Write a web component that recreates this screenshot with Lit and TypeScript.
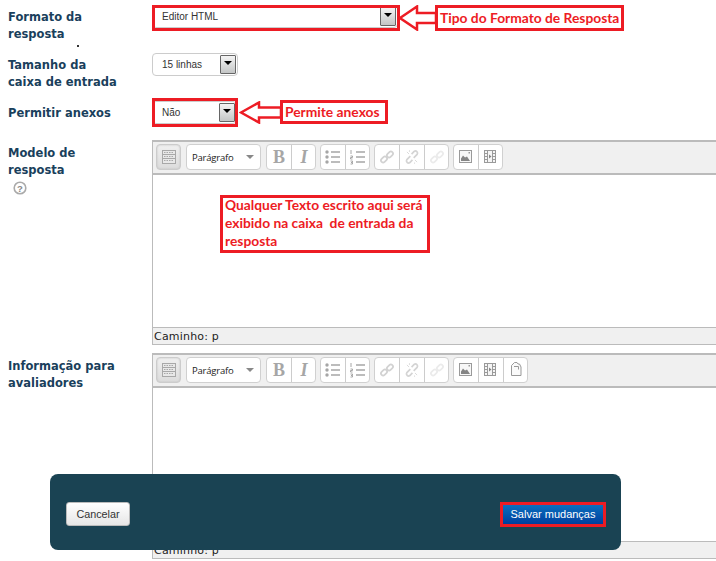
import { LitElement, html, css, svg } from "lit";
import { customElement } from "lit/decorators.js";

const icons: Record<string, any> = {
  table: svg`<g fill="none" stroke="#a8a8a8"><rect x="3.500" y="3.500" width="13" height="13" fill="#e8e8e8"/><path d="M3.500 7.500h13M3.500 11.500h13"/><path d="M5 5.500h10M5 9.500h10M5 13.500h10" stroke-dasharray="1.500 1"/></g>`,
  b: svg`<text x="10" y="16" text-anchor="middle" font-family="Liberation Serif" font-weight="700" font-size="18" fill="#a6a6a6">B</text>`,
  i: svg`<text x="10" y="16" text-anchor="middle" font-family="Liberation Serif" font-style="italic" font-weight="700" font-size="18" fill="#a6a6a6">I</text>`,
  ul: svg`<g fill="#a6a6a6"><circle cx="4" cy="5" r="1.700"/><circle cx="4" cy="10" r="1.700"/><circle cx="4" cy="15" r="1.700"/></g><path d="M8 5h9M8 10h9M8 15h9" stroke="#a6a6a6" stroke-width="1.300"/>`,
  ol: svg`<path d="M3 3v4M2.500 9h2v1.500h-2V12h2M2.500 14h2v1.500h-1.500M2.500 17h2v-1.500" stroke="#a6a6a6" fill="none"/><path d="M8 5h9M8 10h9M8 15h9" stroke="#a6a6a6" stroke-width="1.300"/>`,
  link: svg`<g transform="translate(1.500 1.500) scale(.85)" fill="none" stroke="#d2d2d2" stroke-width="2"><rect x="2.500" y="10.500" width="8" height="5" rx="2.500" transform="rotate(-45 6.500 13)"/><rect x="9.500" y="4.500" width="8" height="5" rx="2.500" transform="rotate(-45 13.500 7)"/></g>`,
  unlink: svg`<g transform="translate(1.500 1.500) scale(.85)" fill="none" stroke="#d4d4d4" stroke-width="2"><path d="M8 9 4 13a2.500 2.500 0 0 0 3.500 3.500l3-3M12 11l4-4a2.500 2.500 0 0 0-3.500-3.500l-3 3"/><path d="M4 4l2.500 2.500M16 16l-2.500-2.500M13 16.500v1.500M7 2v2" stroke-width="1"/></g>`,
  link2: svg`<g transform="translate(1.500 1.500) scale(.85)" fill="none" stroke="#ebebeb" stroke-width="2"><rect x="2.500" y="10.500" width="8" height="5" rx="2.500" transform="rotate(-45 6.500 13)"/><rect x="9.500" y="4.500" width="8" height="5" rx="2.500" transform="rotate(-45 13.500 7)"/></g>`,
  image: svg`<rect x="3.500" y="3.500" width="12" height="12" fill="#f7f7f7" stroke="#9a9a9a"/><path d="M5 14v-2.500l2-3 2 2 2-1 3 4.500z" fill="#858585"/><rect x="12.500" y="5" width="1.500" height="1.500" fill="#999"/>`,
  video: svg`<rect x="3.500" y="3.500" width="11" height="12" fill="#f5f5f5" stroke="#9a9a9a"/><path d="M6.500 3.500v12M11.500 3.500v12M3.500 6.500h3M3.500 9.500h3M3.500 12.500h3M11.500 6.500h3M11.500 9.500h3M11.500 12.500h3" stroke="#9a9a9a" fill="none"/><path d="M8 7.500l2.500 2-2.500 2z" fill="#858585"/>`,
  paste: svg`<path d="M5.500 15.500V5.500l3-3h2.500l1 1.500h1.500l1.500 3v8.500z" fill="#fafafa" stroke="#999"/><path d="M8 6.500h4.500v3" fill="none" stroke="#999"/>`,
};

@customElement("app-root")
export class AppRoot extends LitElement {
  static styles = css`
    :host { display: block; width: 716px; height: 561px; position: relative; overflow: hidden; background: #fff; font-family: "Liberation Sans", Arial, sans-serif; }
    .page { padding: 5px 0 0 8px; }
    .row { display: grid; grid-template-columns: 144px 1fr; }
    .r1 { height: 48px; } .r2 { height: 48px; } .r3 { height: 39px; } .r4 { height: 213px; } .r5 { height: 208px; }
    .label { font: 700 11.500px/16.500px "DejaVu Sans", Verdana, sans-serif; color: #1a3f5c; padding-top: 4px; width: 110px; }
    .r4 .label, .r5 .label { padding-top: 5px; }
    .r3 .label { padding-top: 4px; width: 130px; }
    .help { display: block; margin: 3px 0 0 5px; }
    .select { box-sizing: border-box; height: 23px; border: 1px solid #ccc; border-radius: 4px; display: flex; align-items: center; justify-content: space-between; background: #fff; font-size: 10px; color: #333; padding-left: 9px; }
    .s1 { width: 246px; } .s2 { width: 86px; } .s3 { width: 85px; }
    .drop { box-sizing: border-box; width: 16px; height: 19px; margin-right: 1px; border: 1px solid #666; border-radius: 1px; background: linear-gradient(#f4f4f4, #c4c6c6); display: flex; align-items: center; justify-content: center; }
    .drop i { width: 0; height: 0; border: 4px solid transparent; border-top: 4px solid #000; border-bottom: 0; margin-top: -3px; }
    .editor { width: 640px; box-sizing: border-box; border-style: solid; border-width: 2px 0 1px 1px; border-color: #bbb; display: flex; flex-direction: column; }
    .r4 .editor { height: 205px; } .r5 .editor { height: 206px; }
    .bar { height: 33px; box-sizing: border-box; background: #f0f0f0; border-bottom: 2px solid #bbb; padding: 2px 0 0 3px; display: flex; gap: 4px; }
    .tbtn, .group, .fmt { height: 26px; box-sizing: border-box; border: 1px solid #d0d0d0; border-radius: 4px; background: #fff; }
    .tbtn { width: 25px; background: linear-gradient(#f0f0f0, #dcdcdc); display: flex; align-items: center; justify-content: center; border-color: #ccc; box-shadow: inset 0 0 2px #bbb; }
    .fmt { width: 75px; margin: 0 1px; display: flex; align-items: center; justify-content: space-between; padding: 0 6px 0 5px; font: 9.500px "Open Sans", "Liberation Sans", sans-serif; color: #222; letter-spacing: -.2px; }
    .fmt i { width: 0; height: 0; border: 4px solid transparent; border-top: 4px solid #888; border-bottom: 0; }
    .group { display: flex; }
    .group span { width: 25px; display: flex; align-items: center; justify-content: center; border-right: 1px solid #ccc; box-sizing: border-box; }
    .group span:last-child { border-right: 0; width: 23px; }
    .area { flex: 1; background: #fff; }
    .status { height: 17px; box-sizing: border-box; background: #f0f0f0; border-top: 1px solid #bbb; font: 11px/17px "DejaVu Sans", sans-serif; padding-left: 1px; color: #222; letter-spacing: .2px; }
    .dot { position: absolute; left: 77px; top: 45px; width: 2px; height: 2px; background: #333; }
    .rbox { position: absolute; box-sizing: border-box; border: 3px solid #ed1c24; }
    .note { color: #ed1c24; font: 700 13.800px/18px Lato, "Open Sans", sans-serif; padding: 0 0 0 2px; white-space: nowrap; display: flex; align-items: center; }
    .n1 { left: 435px; top: 5px; width: 189px; height: 26px; }
    .n2 { left: 280px; top: 100px; width: 108px; height: 24px; }
    .n3 { left: 220px; top: 195px; width: 210px; height: 58px; display: block; padding-left: 2px; }
    .n3 span { display: block; margin-top: -2px; }
    .hl1 { left: 152px; top: 5px; width: 248px; height: 26px; }
    .hl2 { left: 152px; top: 98px; width: 86px; height: 29px; }
    .arrow { position: absolute; }
    .a1 { left: 398px; top: 5px; }
    .a2 { left: 239px; top: 101px; }
    .footer { position: absolute; left: 50px; top: 474px; width: 571px; height: 76px; box-sizing: border-box; background: #1a4353; border-radius: 8px; padding: 28px 15px 0 16px; display: flex; justify-content: space-between; align-items: flex-start; }
    .btn { box-sizing: border-box; height: 24px; font: 10.800px/22px "Liberation Sans", sans-serif; text-align: center; border-radius: 3px; }
    .cancel { width: 64px; background: linear-gradient(#fff, #e6e6e6); border: 1px solid #bbb; color: #333; }
    .save { width: 106px; height: 25px; font-size: 11px; background: linear-gradient(#0a6fbe, #003f9e); color: #fff; border: 3px solid #ed1c24; border-radius: 0; line-height: 19px; }
  `;

  private ic(n: string) {
    return html`<svg width="20" height="20" viewBox="0 0 20 20" aria-hidden="true">${icons[n]}</svg>`;
  }

  private editor(extra: boolean) {
    return html`<div class="editor">
      <div class="bar">
        <div class="tbtn">${this.ic("table")}</div>
        <div class="fmt">Parágrafo<i></i></div>
        <div class="group"><span>${this.ic("b")}</span><span>${this.ic("i")}</span></div>
        <div class="group"><span>${this.ic("ul")}</span><span>${this.ic("ol")}</span></div>
        <div class="group"><span>${this.ic("link")}</span><span>${this.ic("unlink")}</span><span>${this.ic("link2")}</span></div>
        <div class="group"><span>${this.ic("image")}</span><span>${this.ic("video")}</span>${extra ? html`<span>${this.ic("paste")}</span>` : ""}</div>
      </div>
      <div class="area"></div>
      <div class="status">Caminho: p</div>
    </div>`;
  }

  private sel(cls: string, t: string) {
    return html`<div class="select ${cls}">${t}<div class="drop"><i></i></div></div>`;
  }

  render() {
    return html`
      <div class="page">
        <div class="row r1"><div class="label">Formato da resposta</div><div>${this.sel("s1", "Editor HTML")}</div></div>
        <div class="row r2"><div class="label">Tamanho da caixa de entrada</div><div>${this.sel("s2", "15 linhas")}</div></div>
        <div class="row r3"><div class="label">Permitir anexos</div><div>${this.sel("s3", "Não")}</div></div>
        <div class="row r4"><div class="label">Modelo de resposta
          <svg class="help" width="14" height="14" viewBox="0 0 14 14"><circle cx="7" cy="7" r="5.800" fill="#fff" stroke="#aaa" stroke-width="1.600"/><text x="7" y="10.500" text-anchor="middle" font-family="Liberation Sans" font-weight="700" font-size="9.500" fill="#888">?</text></svg>
        </div><div>${this.editor(false)}</div></div>
        <div class="row r5"><div class="label">Informação para avaliadores</div><div>${this.editor(true)}</div></div>
      </div>
      <div class="dot"></div>
      <div class="rbox hl1"></div>
      <div class="rbox hl2"></div>
      <svg class="arrow a1" width="38" height="26" viewBox="0 0 38 26"><path d="M2 13 19 1.500v6.500h19v10H19v6.500z" fill="#fff" stroke="#ed1c24" stroke-width="2.500"/></svg>
      <svg class="arrow a2" width="42" height="23" viewBox="0 0 42 23"><path d="M2 11.500 20 1.500v5h22v10H20v5z" fill="#fff" stroke="#ed1c24" stroke-width="2.500"/></svg>
      <div class="rbox note n1">Tipo do Formato de Resposta</div>
      <div class="rbox note n2">Permite anexos</div>
      <div class="rbox note n3"><span>Qualquer Texto escrito aqui será<br />exibido na caixa&nbsp; de entrada da<br />resposta</span></div>
      <div class="footer">
        <div class="btn cancel">Cancelar</div>
        <div class="btn save">Salvar mudanças</div>
      </div>
    `;
  }
}
